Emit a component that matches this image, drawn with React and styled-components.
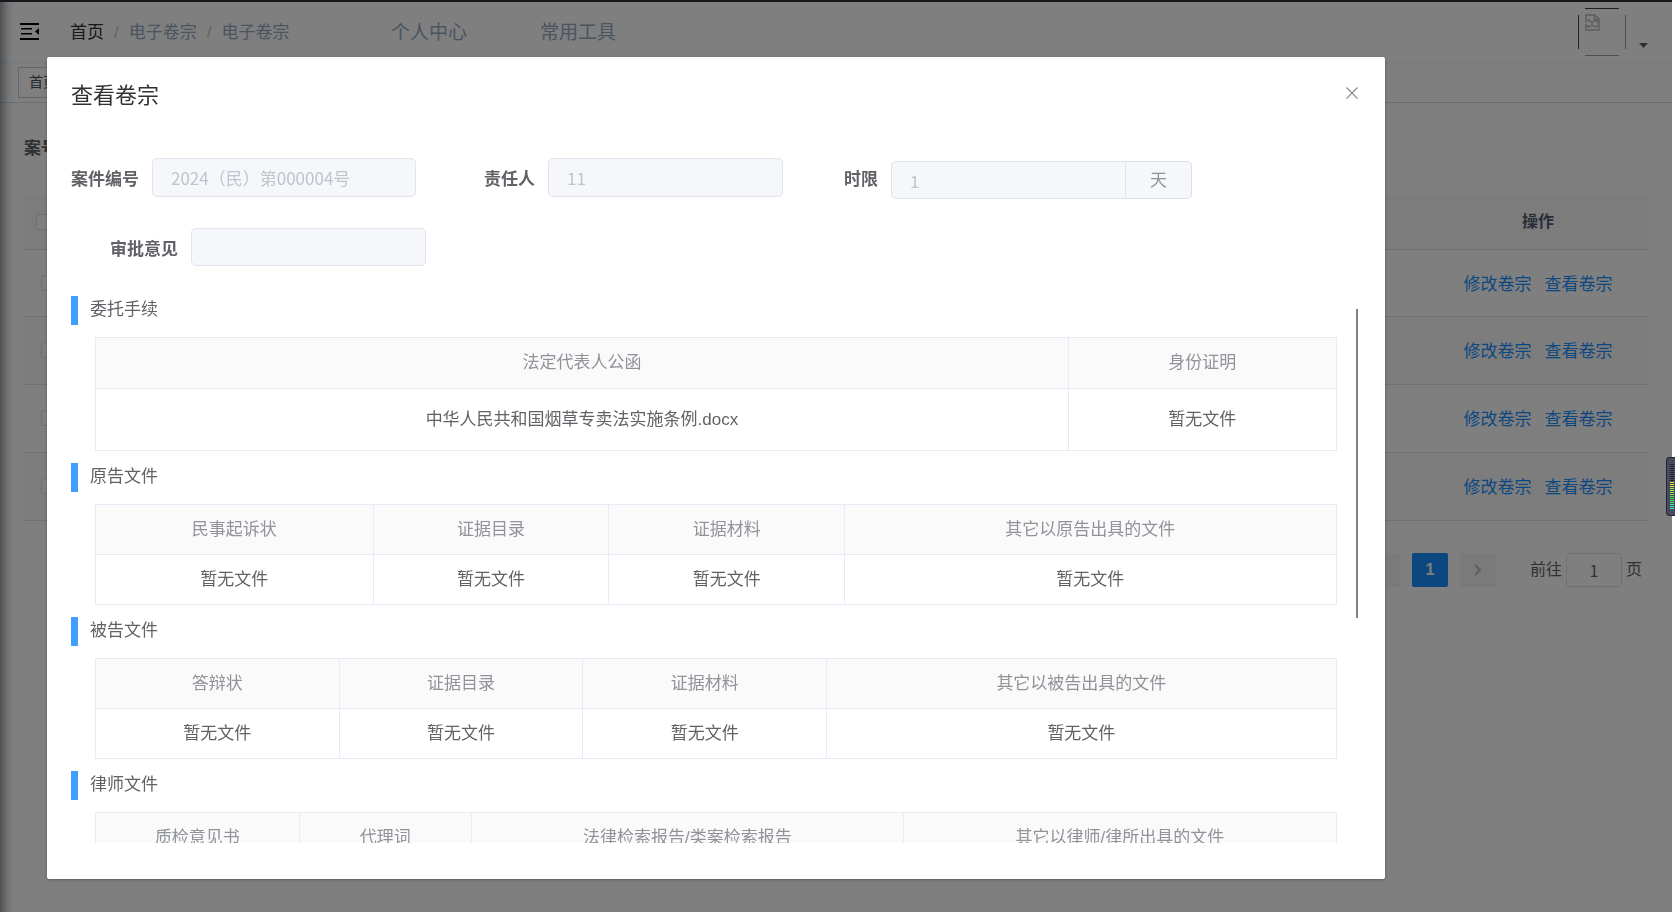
import React from "react";
import styled, { createGlobalStyle } from "styled-components";

const GlobalStyle = createGlobalStyle`
  *, *::before, *::after { box-sizing: border-box; }
  body {
    margin: 0;
    background: #fff;
    color: #606266;
    font-family: "Liberation Sans", "Noto Sans CJK SC", sans-serif;
    font-size: 17px;
    line-height: 24px;
    overflow: hidden;
  }
  a { text-decoration: none; }
  button, input { font: inherit; }
`;

/* ---------- page behind the dialog ---------- */

const Page = styled.div`
  position: relative;
  min-height: 100vh;
  margin-right: 3px;
  border-top: 2px solid #303038;
`;

const SidebarShadow = styled.div`
  position: absolute;
  top: 0;
  bottom: 0;
  left: 0;
  width: 14px;
  background: linear-gradient(to right, rgba(0, 21, 41, 0.4), rgba(0, 21, 41, 0.08) 60%, rgba(0, 21, 41, 0));
`;

const Navbar = styled.header`
  display: flex;
  align-items: center;
  height: 61px;
  padding: 0 24px 0 20px;
  border-bottom: 1px solid #f0f1f2;
`;

const IconButton = styled.button`
  display: flex;
  padding: 0;
  border: 0;
  background: none;
  cursor: pointer;
`;

const Breadcrumb = styled.nav`
  display: flex;
  gap: 10px;
  width: 321px;
  margin-left: 30px;
  padding-top: 2px;
  color: #97a8be;
`;

const Crumb = styled.a`
  color: ${(p) => (p.$home ? "#303133" : "#97a8be")};
`;

const Slash = styled.span`
  color: #c0c4cc;
`;

const TopMenu = styled.nav`
  display: flex;
  flex: 1;
  gap: 73px;
  padding-top: 2px;
  font-size: 19px;
`;

const TopLink = styled.a`
  color: #97a8be;
`;

const UserButton = styled(IconButton)`
  align-items: flex-end;
  gap: 13px;
  height: 48px;
`;

const TabsBar = styled.div`
  display: flex;
  height: 40px;
  padding: 4px 18px;
  border-bottom: 1px solid #d8dce5;
`;

const Tab = styled.a`
  height: 31px;
  padding: 0 10px;
  border: 1px solid #c8ccd4;
  color: #495060;
  font-size: 14px;
  line-height: 29px;
`;

const Content = styled.main`
  padding: 32px 24px;
`;

const SearchLabel = styled.div`
  height: 60px;
  padding-top: 2px;
  font-weight: 700;
`;

const CaseTable = styled.table`
  width: 100%;
  border-collapse: collapse;
  table-layout: fixed;
`;

const CaseHead = styled.th`
  width: ${(p) => p.$width || "auto"};
  height: 54px;
  padding: 0 12px;
  border-bottom: 1px solid #dfe2ea;
  background: #f8f8f9;
  color: #515a6e;
  font-size: 16px;
  font-weight: 700;
  text-align: ${(p) => p.$align || "left"};
`;

const CaseRow = styled.tr`
  height: ${(p) => (p.$first ? "67px" : "68px")};
  background: ${(p) => (p.$striped ? "#fafafa" : "#fff")};
`;

const CaseCell = styled.td`
  padding: 0 17px;
  border-bottom: 1px solid #dfe2ea;
`;

const Checkbox = styled.input`
  display: block;
  width: 16px;
  height: 16px;
  margin: 0;
  appearance: none;
  border: 1px solid #dcdfe6;
  border-radius: 2px;
  background: #fff;
`;

const Actions = styled.div`
  display: flex;
  justify-content: center;
  gap: 13px;
  padding-top: 4px;
`;

const ActionLink = styled.a`
  color: #1890ff;
`;

const Pagination = styled.nav`
  display: flex;
  align-items: center;
  justify-content: flex-end;
  gap: 12px;
  padding: 32px 6px 0 0;
  font-size: 16px;
`;

const PageButton = styled.button`
  display: flex;
  align-items: center;
  justify-content: center;
  width: 36px;
  height: 34px;
  padding: 0;
  border: 0;
  border-radius: 2px;
  background: ${(p) => (p.$active ? "#1890ff" : "#f4f4f5")};
  color: ${(p) => (p.$active ? "#fff" : "#c0c4cc")};
  font-weight: 700;
`;

const Jumper = styled.label`
  display: flex;
  align-items: center;
  gap: 4px;
  height: 34px;
  margin-left: 22px;
  line-height: 28px;
`;

const JumpInput = styled.input`
  width: 56px;
  height: 34px;
  border: 1px solid #dcdfe6;
  border-radius: 4px;
  background: #fff;
  color: #606266;
  font-family: "Noto Sans CJK SC", sans-serif;
  text-align: center;
`;

/* ---------- dialog ---------- */

const Overlay = styled.div`
  position: fixed;
  inset: 0 3px 0 0;
  background: rgba(0, 0, 0, 0.5);
`;

const Dialog = styled.section`
  width: 80%;
  margin: 57px 0 0 47px;
  border-radius: 2px;
  background: #fff;
  box-shadow: 0 1px 3px rgba(0, 0, 0, 0.3);
`;

const DialogHeader = styled.header`
  display: flex;
  align-items: flex-start;
  justify-content: space-between;
  padding: 24px 26px 12px 24px;
`;

const DialogTitle = styled.h2`
  margin: 0;
  color: #303133;
  font-size: 22px;
  font-weight: 400;
  line-height: 29px;
`;

const CloseButton = styled(IconButton)`
  padding: 5px 0;
`;

const DialogBody = styled.div`
  padding: 36px 24px;
`;

const Form = styled.form`
  display: grid;
  grid-template-columns: 413px 360px auto;
  grid-template-rows: 70px 68px;
  justify-content: start;
  align-items: start;
`;

const Field = styled.div`
  display: flex;
  align-items: flex-start;
  gap: 13px;
  padding-left: ${(p) => (p.$indent ? "39px" : "0")};
`;

const FieldLabel = styled.label`
  font-weight: 700;
  line-height: 43px;
  white-space: nowrap;
`;

const TextInput = styled.input`
  width: ${(p) => (p.$wide ? "264px" : "235px")};
  height: ${(p) => (p.$short ? "38px" : "39px")};
  padding: 0 18px;
  border: 1px solid #dfe4ed;
  border-radius: ${(p) => (p.$joined ? "5px 0 0 5px" : "5px")};
  background: #f5f7fa;
  color: #c0c4cc;
  font-family: "Noto Sans CJK SC", sans-serif;
`;

const InputGroup = styled.div`
  display: flex;
  padding-top: 3px;
`;

const Unit = styled.span`
  width: 66px;
  height: 38px;
  border: 1px solid #dcdfe6;
  border-left: 0;
  border-radius: 0 5px 5px 0;
  background: #f5f7fa;
  color: #909399;
  line-height: 38px;
  text-align: center;
`;

const FilesFrame = styled.div`
  position: relative;
`;

const Files = styled.div`
  height: 60vh;
  overflow-y: auto;
  scrollbar-width: none;
`;

const ScrollThumb = styled.div`
  position: absolute;
  top: 13px;
  right: 3px;
  width: 2px;
  height: 309px;
  background: #7f8185;
`;

const SectionTitle = styled.h3`
  height: 29px;
  margin: 0 0 12px;
  padding-left: 12px;
  border-left: 7px solid #409eff;
  font-size: 17px;
  font-weight: 400;
  line-height: 28px;
`;

const FileTable = styled.table`
  width: calc(100% - 48px);
  margin: 0 24px 12px;
  border-collapse: collapse;
  table-layout: fixed;
  text-align: center;
`;

const FileCol = styled.col`
  width: calc(100% * ${(p) => p.$share} / 1242);
`;

const FileHead = styled.th`
  height: ${(p) => (p.$tall ? "51px" : "50px")};
  padding: 0;
  border: 1px solid #e6ebf5;
  background: #fafafa;
  color: #909399;
  font-weight: 400;
`;

const FileCell = styled.td`
  height: ${(p) => (p.$tall ? "62px" : "50px")};
  padding: 0;
  border: 1px solid #e6ebf5;
`;

const Meter = styled.div`
  position: fixed;
  top: 457px;
  right: 0;
  width: 9px;
  height: 59px;
  border: 1px solid #23252f;
  border-right: 0;
  border-radius: 4px 0 0 4px;
  background: #454b5c;
`;

const EMPTY = "暂无文件";

/* each column: heading, share of the table's width, file */
const sections = [
  {
    title: "委托手续",
    tall: true,
    columns: [
      ["法定代表人公函", 974, "中华人民共和国烟草专卖法实施条例.docx"],
      ["身份证明", 268, EMPTY],
    ],
  },
  {
    title: "原告文件",
    columns: [
      ["民事起诉状", 278, EMPTY],
      ["证据目录", 236, EMPTY],
      ["证据材料", 236, EMPTY],
      ["其它以原告出具的文件", 492, EMPTY],
    ],
  },
  {
    title: "被告文件",
    columns: [
      ["答辩状", 244, EMPTY],
      ["证据目录", 244, EMPTY],
      ["证据材料", 244, EMPTY],
      ["其它以被告出具的文件", 510, EMPTY],
    ],
  },
  {
    title: "律师文件",
    columns: [
      ["质检意见书", 204, EMPTY],
      ["代理词", 172, EMPTY],
      ["法律检索报告/类案检索报告", 433, EMPTY],
      ["其它以律师/律所出具的文件", 433, EMPTY],
    ],
  },
];

function FoldIcon() {
  return (
    <svg width="20" height="20" viewBox="0 0 20 20" fill="#000" aria-hidden="true">
      <path d="M0 1h19v2H0zM1 6h11v1.500H1zM1 11h11v1.500H1zM0 16h19v2H0zM19 6v7l-4-3.500z" />
    </svg>
  );
}

function BrokenAvatar() {
  return (
    <svg width="48" height="48" viewBox="0 0 48 48" fill="none" aria-hidden="true">
      <path d="M7 .5h34M.5 7v34" stroke="#404040" />
      <path d="M7 47.5h34M47.5 7v34" stroke="#a0a0a0" />
      <path
        d="M8 14V7h9l4 4v5M16.500 7v4.500H21M8 14l3-2 3 3 3-3 4 3M8 22v-5l3 2 3-2 3 2 4-2v5z"
        stroke="#bcbcbc"
        strokeWidth="1.500"
      />
    </svg>
  );
}

function Caret() {
  return (
    <svg width="9" height="14" viewBox="0 0 9 14" fill="#5a5e66" aria-hidden="true">
      <path d="M0 1h9L4.500 6z" />
    </svg>
  );
}

function CloseIcon() {
  return (
    <svg width="14" height="14" viewBox="0 0 14 14" stroke="#909399" strokeWidth="1.300" aria-hidden="true">
      <path d="M1.500 1.500l11 11M12.500 1.500l-11 11" />
    </svg>
  );
}

function Chevron({ back }) {
  return (
    <svg width="10" height="12" viewBox="0 0 10 12" fill="none" stroke="#b4b8c0" strokeWidth="1.800" aria-hidden="true">
      <path d={back ? "M6 1L1 6l5 5" : "M2 1l5 5-5 5"} />
    </svg>
  );
}

function MeterBars() {
  const bars = Array.from({ length: 23 }, (_, i) => i);
  const hue = (i) => 54 + (i - 9) * 9;
  return (
    <svg width="8" height="57" viewBox="0 0 8 57" aria-hidden="true">
      {bars.map((i) => (
        <rect key={i} x="3" y={6 + i * 2} width="4" height="1" fill={i < 9 ? "#23252f" : `hsl(${hue(i)} 80% 60%)`} />
      ))}
    </svg>
  );
}

function FileSection({ title, columns, tall }) {
  return (
    <section>
      <SectionTitle>{title}</SectionTitle>
      <FileTable>
        <colgroup>
          {columns.map(([name, share]) => (
            <FileCol key={name} $share={share} />
          ))}
        </colgroup>
        <thead>
          <tr>
            {columns.map(([name]) => (
              <FileHead key={name} $tall={tall}>{name}</FileHead>
            ))}
          </tr>
        </thead>
        <tbody>
          <tr>
            {columns.map(([name, , file]) => (
              <FileCell key={name} $tall={tall}>{file}</FileCell>
            ))}
          </tr>
        </tbody>
      </FileTable>
    </section>
  );
}

export default function App() {
  return (
    <>
      <GlobalStyle />
      <Page>
        <Navbar>
          <IconButton type="button" aria-label="收起菜单">
            <FoldIcon />
          </IconButton>
          <Breadcrumb>
            <Crumb href="#" $home>首页</Crumb>
            <Slash>/</Slash>
            <Crumb href="#">电子卷宗</Crumb>
            <Slash>/</Slash>
            <Crumb href="#">电子卷宗</Crumb>
          </Breadcrumb>
          <TopMenu>
            <TopLink href="#">个人中心</TopLink>
            <TopLink href="#">常用工具</TopLink>
          </TopMenu>
          <UserButton type="button" aria-label="用户菜单">
            <BrokenAvatar />
            <Caret />
          </UserButton>
        </Navbar>
        <TabsBar>
          <Tab href="#">首页</Tab>
        </TabsBar>
        <Content>
          <SearchLabel>案号</SearchLabel>
          <CaseTable>
            <thead>
              <tr>
                <CaseHead $width="60px">
                  <Checkbox type="checkbox" aria-label="全选" />
                </CaseHead>
                <CaseHead />
                <CaseHead $width="220px" $align="center">操作</CaseHead>
              </tr>
            </thead>
            <tbody>
              {[0, 1, 2, 3].map((row) => (
                <CaseRow key={row} $first={row === 0} $striped={row % 2 === 1}>
                  <CaseCell>
                    <Checkbox type="checkbox" aria-label="选择" />
                  </CaseCell>
                  <CaseCell />
                  <CaseCell>
                    <Actions>
                      <ActionLink href="#">修改卷宗</ActionLink>
                      <ActionLink href="#">查看卷宗</ActionLink>
                    </Actions>
                  </CaseCell>
                </CaseRow>
              ))}
            </tbody>
          </CaseTable>
          <Pagination>
            <PageButton type="button" aria-label="上一页"><Chevron back /></PageButton>
            <PageButton type="button" $active>1</PageButton>
            <PageButton type="button" aria-label="下一页"><Chevron /></PageButton>
            <Jumper>
              前往
              <JumpInput type="text" defaultValue="1" />
              页
            </Jumper>
          </Pagination>
        </Content>
        <SidebarShadow />
      </Page>

      <Overlay>
        <Dialog role="dialog" aria-labelledby="dialog-title">
          <DialogHeader>
            <DialogTitle id="dialog-title">查看卷宗</DialogTitle>
            <CloseButton type="button" aria-label="关闭">
              <CloseIcon />
            </CloseButton>
          </DialogHeader>
          <DialogBody>
            <Form>
              <Field>
                <FieldLabel htmlFor="case-no">案件编号</FieldLabel>
                <TextInput id="case-no" $wide disabled defaultValue="2024（民）第000004号" />
              </Field>
              <Field>
                <FieldLabel htmlFor="owner">责任人</FieldLabel>
                <TextInput id="owner" disabled defaultValue="11" />
              </Field>
              <Field>
                <FieldLabel htmlFor="limit">时限</FieldLabel>
                <InputGroup>
                  <TextInput id="limit" $joined $short disabled defaultValue="1" />
                  <Unit>天</Unit>
                </InputGroup>
              </Field>
              <Field $indent>
                <FieldLabel htmlFor="opinion">审批意见</FieldLabel>
                <TextInput id="opinion" $short disabled />
              </Field>
            </Form>
            <FilesFrame>
              <Files>
                {sections.map((section) => (
                  <FileSection key={section.title} {...section} />
                ))}
              </Files>
              <ScrollThumb />
            </FilesFrame>
          </DialogBody>
        </Dialog>
      </Overlay>

      <Meter>
        <MeterBars />
      </Meter>
    </>
  );
}
